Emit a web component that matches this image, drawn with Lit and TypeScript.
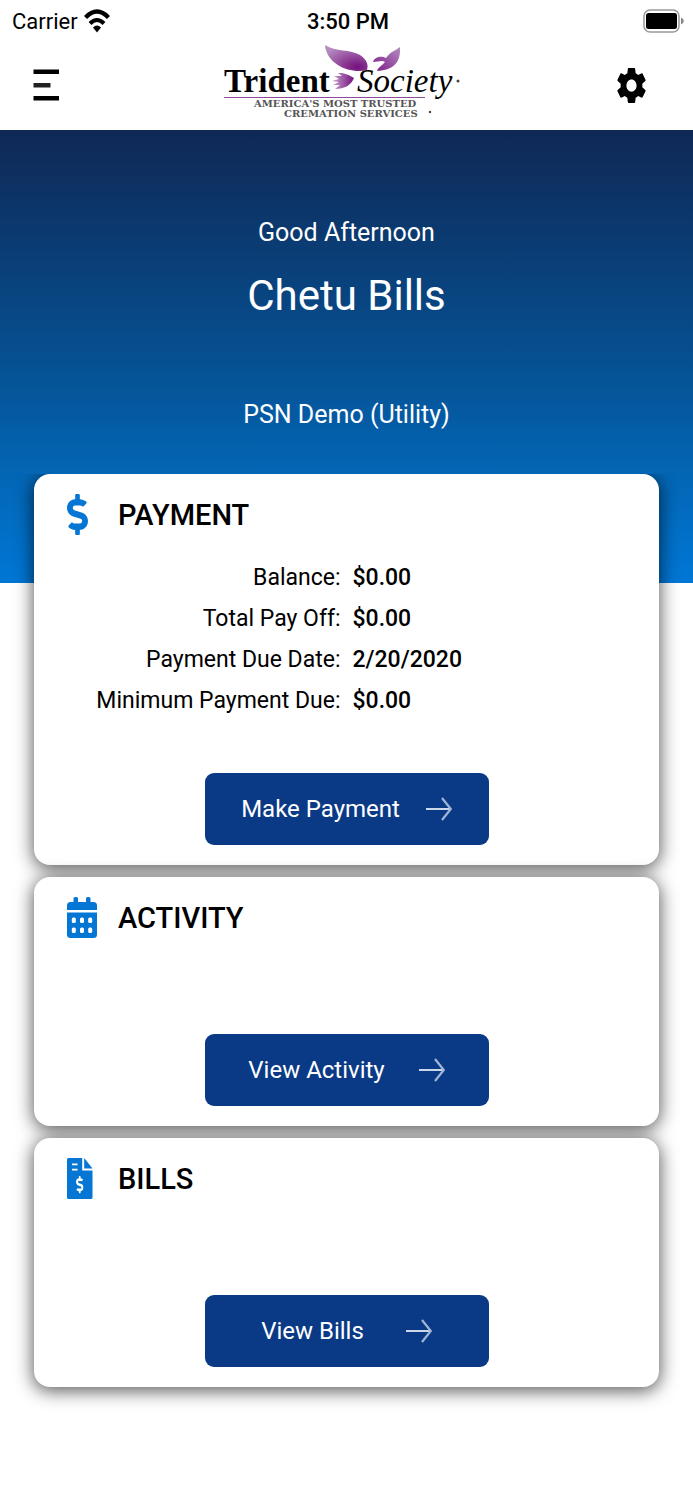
import { LitElement, html, svg, css } from "lit";
import { customElement } from "lit/decorators.js";

const dollarPath =
  "M209.2 233.4l-108-31.6C88.7 198.2 80 186.5 80 173.5c0-16.3 13.2-29.5 29.5-29.5h66.3c12.2 0 24.2 3.7 34.2 10.5 6.1 4.1 14.3 3.1 19.5-2l34.8-34c7.1-6.9 6.1-18.4-1.8-24.5C238 74.8 207.4 64.1 176 64V16c0-8.800-7.200-16-16-16h-32c-8.800 0-16 7.200-16 16v48h-2.500C45.800 64-5.400 118.700.500 183.600c4.200 46.100 39.400 83.600 83.800 96.600l102.500 30c12.500 3.700 21.200 15.300 21.200 28.300 0 16.300-13.200 29.500-29.500 29.500h-66.300C100 368 88 364.300 78 357.500c-6.100-4.100-14.300-3.100-19.500 2l-34.800 34c-7.100 6.900-6.100 18.400 1.800 24.500 24.500 19.200 55.100 29.900 86.500 30v48c0 8.800 7.200 16 16 16h32c8.800 0 16-7.200 16-16v-48.200c46.600-.900 90.300-28.600 105.700-72.700 21.500-61.600-14.600-124.800-72.500-141.700z";

const dollarIcon = html`<svg width="21" height="41" viewBox="0 0 288 512" preserveAspectRatio="none" aria-hidden="true">
  <path fill="#0576d3" d=${dollarPath} />
</svg>`;

const calendarIcon = html`<svg width="30" height="41" viewBox="0 0 30 41" aria-hidden="true">
  <path
    fill="#0576d3"
    d="M0 13V8.500Q0 5 3.500 5H6.500V1.500Q6.500 0 8 0H9.500Q11 0 11 1.500V5H19V1.500Q19 0 20.500 0H22Q23.500 0 23.500 1.500V5H26.500Q30 5 30 8.500V13Z"
  />
  <path fill="#0576d3" d="M0 15.500H30V37.500Q30 41 26.500 41H3.500Q0 41 0 37.500Z" />
  ${[4.8, 13, 21.2].map(
    (x) => svg`<rect x=${x} y="20.500" width="4" height="5.500" rx="1.500" fill="#fff" /><rect x=${x} y="30.500" width="4" height="5.500" rx="1.500" fill="#fff" />`
  )}
</svg>`;

const billIcon = html`<svg width="26" height="41" viewBox="0 0 26 41" aria-hidden="true">
  <path fill="#0576d3" d="M1.500 0H15.200V12.500H25.500V39.500Q25.500 41 24 41H1.500Q0 41 0 39.500V1.500Q0 0 1.500 0Z" />
  <path fill="#0576d3" d="M17.200 0L25.500 10.400H17.200Z" />
  <path stroke="#fff" stroke-width="1.800" d="M5 6.400H10.500M5 11.600H10.500" />
  <svg x="9" y="18" width="7.500" height="17.500" viewBox="0 0 288 512" preserveAspectRatio="none">
    <path fill="#fff" d=${dollarPath} />
  </svg>
</svg>`;

const arrowIcon = html`<svg width="26" height="24" viewBox="0 0 26 24" fill="none" aria-hidden="true">
  <path stroke="#ccd7ea" stroke-width="2" d="M0 12H24.500" />
  <path stroke="#a3b5d6" stroke-width="2.200" d="M16 1L24.800 12L16 23" />
</svg>`;

@customElement("app-root")
export class AppRoot extends LitElement {
  static styles = css`
    :host {
      display: block;
      min-height: 100vh;
      background: #fff;
      color: #000;
      font-family: Roboto, "Noto Sans", sans-serif;
    }
    * {
      box-sizing: border-box;
    }
    svg {
      display: block;
      flex: none;
    }
    .status {
      display: grid;
      grid-template-columns: 1fr auto 1fr;
      align-items: center;
      height: 44px;
      padding: 0 9px 2px 12px;
      font-size: 22px;
    }
    .carrier {
      display: flex;
      align-items: center;
      gap: 6px;
    }
    .time {
      font-weight: 500;
    }
    .battery {
      justify-self: end;
    }
    .bar {
      display: grid;
      grid-template-columns: 1fr auto 1fr;
      align-items: center;
      height: 86px;
      padding: 0 47px 4px 31px;
    }
    .icon-button {
      padding: 0;
      border: 0;
      background: none;
      cursor: pointer;
    }
    .settings {
      justify-self: end;
    }
    .menu {
      justify-self: start;
    }
    .logo-name {
      font-family: "Liberation Serif", serif;
      font-size: 33px;
    }
    .trident {
      font-weight: 700;
    }
    .society {
      font-style: italic;
    }
    .tag {
      font-family: "DejaVu Serif", serif;
      font-size: 10px;
      font-weight: 700;
      fill: #555;
    }
    .hero {
      display: flex;
      flex-direction: column;
      align-items: center;
      padding: 84px 20px 149px;
      background: linear-gradient(#0f2855, #064f90 50%, #0366b5 76%, #0077d6);
      color: #fff;
      font-size: 25px;
      line-height: 38px;
    }
    .hero p {
      margin: 0;
    }
    .hero h1 {
      margin: 12px 0 68px;
      font-size: 42px;
      font-weight: 400;
      line-height: 64px;
    }
    .cards {
      display: flex;
      flex-direction: column;
      gap: 12px;
      margin-top: -109px;
      padding: 0 34px 60px;
      overflow: hidden;
    }
    .card {
      position: relative;
      display: flex;
      flex-direction: column;
      align-items: center;
      min-height: 249px;
      padding: 20px 0;
      border-radius: 16px;
      background: #fff;
      box-shadow: 0 3px 18px 1px rgba(0, 0, 0, 0.65);
    }
    .card:last-child {
      clip-path: inset(-12px -34px -40px);
    }
    .head {
      display: grid;
      grid-template-columns: 51px 1fr;
      align-items: center;
      align-self: stretch;
      height: 41px;
      padding: 0 33px;
    }
    .head h2 {
      margin: 0;
      font-size: 29px;
      font-weight: 500;
      line-height: 40px;
    }
    .facts {
      display: grid;
      grid-template-columns: 1fr 1fr;
      column-gap: 12px;
      align-self: stretch;
      margin: 22px 0 52px;
      font-size: 23px;
      line-height: 41px;
    }
    .facts dt {
      text-align: right;
    }
    .facts dd {
      margin: 0;
      font-weight: 500;
    }
    .action {
      display: flex;
      align-items: center;
      justify-content: center;
      width: 284px;
      height: 72px;
      margin-top: auto;
      padding: 0;
      border: 0;
      border-radius: 9px;
      background: #0a3a86;
      color: #fff;
      font: inherit;
      font-size: 24px;
      cursor: pointer;
    }
    .near {
      gap: 26px;
    }
    .mid {
      gap: 34px;
    }
    .far {
      gap: 42px;
    }
  `;

  private logo() {
    return html`<svg width="244" height="82" viewBox="-6 0 244 82" role="img" aria-label="Trident Society">
      <defs>
        <radialGradient id="wing" cx="0.75" cy="0.85" r="0.9">
          <stop offset="0" stop-color="#74107c" />
          <stop offset="1" stop-color="#b58abf" />
        </radialGradient>
        <linearGradient id="tip" x1="0" y1="1" x2="1" y2="0">
          <stop offset="0" stop-color="#7d1c87" />
          <stop offset="1" stop-color="#b48cc0" />
        </linearGradient>
        <linearGradient id="tail">
          <stop offset="0" stop-color="#c9a4d0" />
          <stop offset="1" stop-color="#74107c" />
        </linearGradient>
      </defs>
      <path fill="url(#wing)" d="M102 1C113 8 127 5 137 11C143 15 146 20 144 26C129 30 104 22 102 1Z" />
      <path fill="url(#tip)" d="M177 3C178 18 171 26 154 27C155 23 159 22 162 18C159 16 155 18 150 18C152 12 159 12 163 14C168 7 172 7 177 3Z" />
      <path
        fill="url(#tail)"
        d="M131 34C126 31 122 29 115 29L119 32L111 32L116 35L109 37L116 38L110 41L117 41L112 45C122 45 128 41 131 34Z"
      />
      <text class="logo-name trident" x="1" y="48">Trident</text>
      <text class="logo-name society" x="134" y="48">Society</text>
      <circle cx="235" cy="37" r="1.500" fill="#444" />
      <path stroke="#8d4b98" stroke-width="1" d="M1 53.500H202" />
      <text class="tag" x="31" y="63">AMERICA'S MOST TRUSTED</text>
      <text class="tag" x="61" y="73">CREMATION SERVICES</text>
      <circle cx="207" cy="68" r="1.200" fill="#444" />
    </svg>`;
  }

  render() {
    return html`
      <div class="status">
        <span class="carrier">
          Carrier
          <svg width="26" height="24" viewBox="0 0 26 24" fill="none" aria-label="Wi-Fi">
            <path stroke="#000" stroke-width="4.400" d="M1.500 8.500Q13 -3.500 24.500 8.500" />
            <path stroke="#000" stroke-width="4" d="M6 14.500Q13 7.500 20 14.500" />
            <path fill="#000" d="M9 18.500Q13 14.500 17 18.500L13 23.500Z" />
          </svg>
        </span>
        <span class="time">3:50 PM</span>
        <svg class="battery" width="41" height="24" viewBox="0 0 41 24" aria-label="Battery full">
          <rect x="1" y="1" width="35" height="22" rx="6" fill="none" stroke="#999" stroke-width="1.500" />
          <rect x="3" y="4" width="31" height="16" rx="2.500" />
          <path fill="#888" d="M38 8.500Q40.800 9.500 40.800 12T38 15.500Z" />
        </svg>
      </div>
      <header class="bar">
        <button class="icon-button menu" aria-label="Menu">
          <svg width="28" height="32" viewBox="0 0 28 32">
            <path fill="#000" d="M2.500 0.500H28V5H2.500ZM2.500 27H28V31.500H2.500Z" />
            <path fill="#222" d="M2.500 14H19.500V18.500H2.500Z" />
          </svg>
        </button>
        ${this.logo()}
        <button class="icon-button settings" aria-label="Settings">
          <svg width="29" height="35" viewBox="2 2 20 20" preserveAspectRatio="none">
            <path
              d="M19.430 12.980c.040-.320.070-.640.070-.980s-.030-.660-.070-.980l2.110-1.650c.190-.150.240-.420.120-.640l-2-3.460c-.120-.220-.390-.300-.610-.220l-2.490 1c-.520-.400-1.080-.730-1.690-.980l-.380-2.650C14.460 2.180 14.250 2 14 2h-4c-.250 0-.460.180-.490.420l-.380 2.650c-.610.250-1.170.590-1.690.980l-2.490-1c-.230-.090-.490 0-.610.220l-2 3.460c-.130.220-.070.490.120.640l2.110 1.650c-.040.320-.070.650-.070.980s.030.660.070.980l-2.110 1.650c-.190.150-.240.420-.120.640l2 3.460c.120.220.390.300.610.220l2.490-1c.520.400 1.080.730 1.690.980l.380 2.650c.030.240.240.420.490.420h4c.250 0 .460-.180.490-.420l.380-2.650c.610-.250 1.170-.590 1.690-.980l2.490 1c.230.090.490 0 .610-.220l2-3.460c.120-.220.070-.490-.120-.640l-2.110-1.650zM12 15.500c-1.930 0-3.500-1.570-3.500-3.500s1.570-3.500 3.500-3.500 3.500 1.570 3.500 3.500-1.570 3.500-3.500 3.500z"
            />
          </svg>
        </button>
      </header>
      <section class="hero">
        <p>Good Afternoon</p>
        <h1>Chetu Bills</h1>
        <p>PSN Demo (Utility)</p>
      </section>
      <main class="cards">
        <section class="card">
          <div class="head">${dollarIcon}<h2>PAYMENT</h2></div>
          <dl class="facts">
            <dt>Balance:</dt>
            <dd>$0.00</dd>
            <dt>Total Pay Off:</dt>
            <dd>$0.00</dd>
            <dt>Payment Due Date:</dt>
            <dd>2/20/2020</dd>
            <dt>Minimum Payment Due:</dt>
            <dd>$0.00</dd>
          </dl>
          <button class="action near">Make Payment ${arrowIcon}</button>
        </section>
        <section class="card">
          <div class="head">${calendarIcon}<h2>ACTIVITY</h2></div>
          <button class="action mid">View Activity ${arrowIcon}</button>
        </section>
        <section class="card">
          <div class="head">${billIcon}<h2>BILLS</h2></div>
          <button class="action far">View Bills ${arrowIcon}</button>
        </section>
      </main>
    `;
  }
}
